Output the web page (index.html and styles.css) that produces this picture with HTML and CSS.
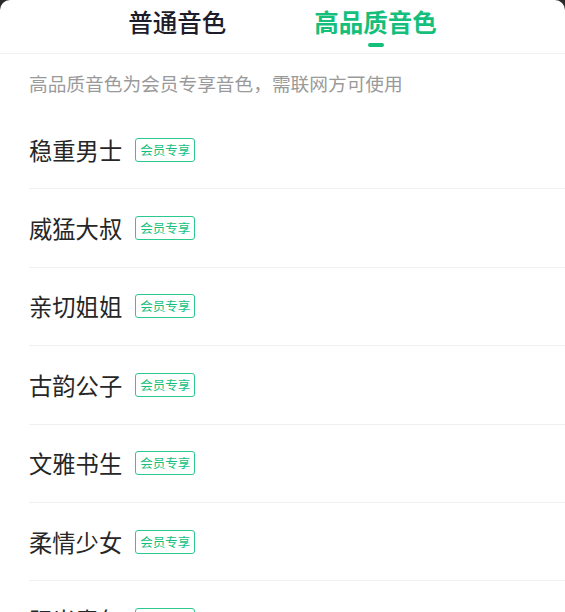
FILE: index.html
```html
<!DOCTYPE html>
<html lang="zh">
<head>
<meta charset="utf-8">
<link rel="stylesheet" href="styles.css">
</head>
<body>
<div class="sheet">
  <div class="tabs">
    <div class="tab">普通音色</div>
    <div class="tab active">高品质音色</div>
  </div>
  <div class="tip">高品质音色为会员专享音色，需联网方可使用</div>
  <ul class="list">
    <li class="row"><span class="name">稳重男士</span><span class="badge">会员专享</span></li>
    <li class="row"><span class="name">威猛大叔</span><span class="badge">会员专享</span></li>
    <li class="row"><span class="name">亲切姐姐</span><span class="badge">会员专享</span></li>
    <li class="row"><span class="name">古韵公子</span><span class="badge">会员专享</span></li>
    <li class="row"><span class="name">文雅书生</span><span class="badge">会员专享</span></li>
    <li class="row"><span class="name">柔情少女</span><span class="badge">会员专享</span></li>
    <li class="row"><span class="name">阳光青年</span><span class="badge">会员专享</span></li>
  </ul>
</div>
</body>
</html>
```
FILE: styles.css
```css
html, body {
  margin: 0;
  padding: 0;
  background: #2a2a2a;
  height: 612px;
  overflow: hidden;
}
.sheet {
  background: #fff;
  border-radius: 10px 10px 0 0;
  height: 612px;
  font-family: "Noto Sans CJK SC", "Noto Sans", sans-serif;
  overflow: hidden;
}
.tabs {
  display: flex;
  justify-content: center;
  gap: 88px;
  height: 53px;
  border-bottom: 1px solid #f1f1f1;
}
.tab {
  position: relative;
  font-size: 24.5px;
  line-height: 43px;
  font-weight: 500;
  color: #1c1c2a;
}
.tab.active {
  color: #14bf7c;
  font-weight: 700;
}
.tab.active::after {
  content: "";
  position: absolute;
  left: 50%;
  top: 43px;
  width: 16px;
  height: 4px;
  margin-left: -8px;
  border-radius: 2px;
  background: #14bf7c;
}
.tip {
  font-size: 18.7px;
  line-height: 57px;
  height: 57px;
  color: #9a9a9a;
  padding-left: 29px;
  white-space: nowrap;
}
.list {
  list-style: none;
  margin: 0 0 0 29px;
  padding: 0;
}
.row {
  display: flex;
  align-items: center;
  height: 77.4px;
  border-bottom: 1px solid #f0f0f0;
}
.name {
  font-size: 23.3px;
  color: #262626;
}
.badge {
  margin-left: 13px;
  width: 58px;
  height: 22px;
  border: 1px solid #2cc98e;
  border-radius: 3px;
  color: #14bf7c;
  font-size: 12.5px;
  line-height: 22px;
  text-align: center;
}
```
